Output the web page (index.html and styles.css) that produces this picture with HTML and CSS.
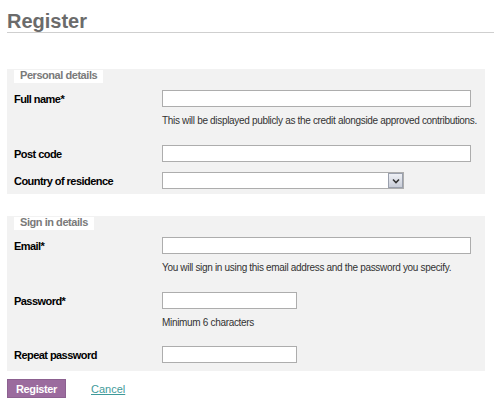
FILE: index.html
```html
<!DOCTYPE html>
<html>
<head>
<meta charset="utf-8">
<title>Register</title>
<link rel="stylesheet" href="styles.css">
</head>
<body>
<div class="page">
  <h1 class="title">Register</h1>
  <form class="form">
    <div class="section section-first">
      <div class="legend">Personal details</div>
      <div class="row row-first">
        <label class="label">Full name*</label>
        <input class="input input-wide" type="text">
      </div>
      <p class="help">This will be displayed publicly as the credit alongside approved contributions.</p>
      <div class="row row-after-help">
        <label class="label">Post code</label>
        <input class="input input-wide" type="text">
      </div>
      <div class="row row-next">
        <label class="label">Country of residence</label>
        <div class="select-wrap">
          <select class="select"><option></option></select>
          <span class="select-btn">
            <svg width="8" height="6" viewBox="0 0 8 6"><path d="M1 1.5 L4 4.5 L7 1.5" fill="none" stroke="#333" stroke-width="1.6"/></svg>
          </span>
        </div>
      </div>
    </div>
    <div class="section section-second">
      <div class="legend">Sign in details</div>
      <div class="row row-first">
        <label class="label">Email*</label>
        <input class="input input-wide" type="text">
      </div>
      <p class="help">You will sign in using this email address and the password you specify.</p>
      <div class="row row-after-help">
        <label class="label">Password*</label>
        <input class="input input-short" type="password">
      </div>
      <p class="help">Minimum 6 characters</p>
      <div class="row row-after-help2">
        <label class="label">Repeat password</label>
        <input class="input input-short" type="password">
      </div>
    </div>
    <div class="actions">
      <button class="btn" type="button">Register</button>
      <a class="cancel" href="#">Cancel</a>
    </div>
  </form>
</div>
</body>
</html>
```

FILE: styles.css
```css
html, body {
  margin: 0;
  padding: 0;
  background: #fff;
}
body {
  font-family: "Liberation Sans", Arial, sans-serif;
  font-size: 11px;
  color: #000;
}
.page {
  padding: 0 0 0 7px;
}
.title {
  margin: 0;
  padding-top: 10px;
  height: 22px;
  font-size: 20px;
  line-height: 22px;
  font-weight: bold;
  color: #6b6b6b;
  border-bottom: 1px solid #cfcfcf;
}
.form {
  width: 478px;
}
.section {
  background: #f2f2f2;
}
.section-first {
  margin-top: 36px;
  padding-bottom: 5px;
}
.section-second {
  margin-top: 22px;
  padding-bottom: 8px;
}
.legend {
  display: inline-block;
  margin-left: 7px;
  height: 13px;
  padding: 0 6px;
  background: #fff;
  color: #7a7a7a;
  font-weight: bold;
  font-size: 11px;
  line-height: 11px;
  letter-spacing: -0.45px;
}
.row {
  display: flex;
  align-items: center;
}
.row-first { margin-top: 7px; }
.row-after-help { margin-top: 18px; }
.row-after-help2 { margin-top: 17px; }
.row-next { margin-top: 10px; }
.label {
  width: 148px;
  padding-left: 7px;
  font-weight: bold;
  font-size: 11px;
  letter-spacing: -0.55px;
}
.input {
  box-sizing: border-box;
  height: 17px;
  border: 1px solid #adadad;
  background: #fff;
  margin: 0;
  padding: 0 2px;
  outline: none;
}
.input-wide { width: 309px; }
.input-short { width: 135px; }
.help {
  margin: 8px 0 0 155px;
  font-size: 10px;
  line-height: 12px;
  letter-spacing: -0.32px;
  color: #333;
}
.select-wrap {
  position: relative;
  width: 242px;
  height: 17px;
}
.select {
  box-sizing: border-box;
  width: 242px;
  height: 17px;
  border: 1px solid #adadad;
  background: #fff;
  appearance: none;
  -webkit-appearance: none;
  margin: 0;
  outline: none;
}
.select-btn {
  position: absolute;
  right: 1px;
  top: 1px;
  width: 13px;
  height: 13px;
  border: 1px solid #9aa0ad;
  background: linear-gradient(#eef0f5, #c9cdd8);
  display: flex;
  align-items: center;
  justify-content: center;
}
.actions {
  display: flex;
  align-items: center;
  margin-top: 8px;
}
.btn {
  box-sizing: border-box;
  width: 59px;
  height: 19px;
  padding: 0;
  border: 1px solid #8c6190;
  background: #9b6b9e;
  color: #fff;
  font-family: "Liberation Sans", Arial, sans-serif;
  font-weight: bold;
  font-size: 11px;
  letter-spacing: -0.4px;
}
.cancel {
  margin-left: 25px;
  color: #3f9a9a;
  font-size: 11px;
  text-decoration: underline;
}
```
